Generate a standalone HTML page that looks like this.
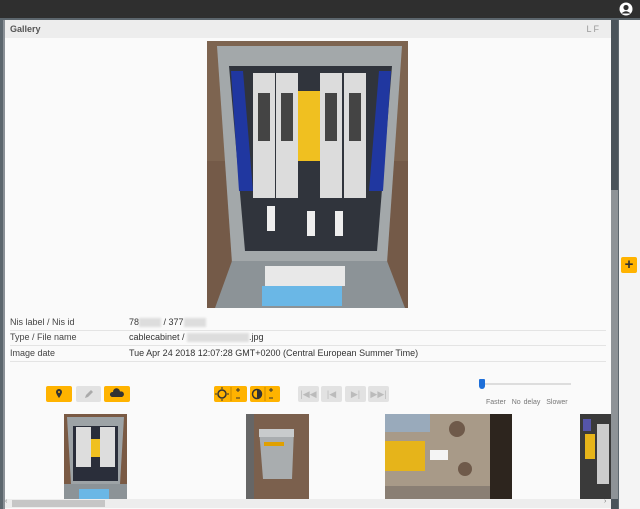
<!DOCTYPE html>
<html><head><style>
*{margin:0;padding:0;box-sizing:border-box}
body{width:640px;height:509px;overflow:hidden;background:#5c666d;font-family:"Liberation Sans",sans-serif;position:relative}
.a{position:absolute}
.top{left:0;top:0;width:640px;height:18px;background:#2f2f2f}
.win{left:3px;top:20px;width:608px;height:489px;background:#fafafa;border-left:2px solid #8a9096}
.hdr{left:5px;top:20px;width:606px;height:18px;background:#ededed;font-size:9px;font-weight:bold;color:#555;padding:4px 5px}
.lbl{font-size:9px;color:#444;left:10px}
.val{font-size:9px;color:#333;left:129px}
.ln{left:10px;width:596px;height:1px;background:#e4e4e4}
.b{height:16px;border-radius:2px;background:#ffb300}
.g{background:#e2e2e2}
.blur{display:inline-block;background:#ddd;height:9px;vertical-align:middle;filter:blur(1px)}
</style></head><body>
<div class="a top"></div>
<svg class="a" style="left:619px;top:2px" width="14" height="14" viewBox="0 0 14 14"><circle cx="7" cy="7" r="6.5" fill="#fff"/><circle cx="7" cy="5.5" r="2.6" fill="#2f2f2f"/><path d="M2.5 11.5Q7 7 11.5 11.5" fill="#2f2f2f"/></svg>
<div class="a win"></div>
<div class="a hdr">Gallery<span style="position:absolute;right:10px;top:4px;font-weight:normal;color:#999;letter-spacing:2px">LF</span></div>
<div class="a" style="left:611px;top:20px;width:7px;height:489px;background:#8e9397"></div>
<div class="a" style="left:611px;top:20px;width:7px;height:170px;background:#4a535a"></div>
<div class="a" style="left:619px;top:20px;width:21px;height:489px;background:#f4f4f4"></div>
<div class="a" style="left:621px;top:257px;width:16px;height:16px;background:#ffb300;border-radius:2px;color:#333;font-weight:bold;font-size:15px;line-height:16px;text-align:center">+</div>

<svg class="a" style="left:207px;top:41px" width="201" height="267" viewBox="0 0 201 267">
<rect width="201" height="267" fill="#7d6450"/>
<rect x="0" y="120" width="201" height="147" fill="#6e5442" opacity=".6"/>
<path d="M10 5H195L180 222H25Z" fill="#a3a8aa"/>
<path d="M22 25H185L170 210H38Z" fill="#30343c"/>
<path d="M24 30H36L46 150H32Z" fill="#2037a0"/><path d="M172 30H184L176 150H162Z" fill="#2037a0"/>
<rect x="46" y="32" width="22" height="125" fill="#dcdcdc"/><rect x="69" y="32" width="22" height="125" fill="#dcdcdc"/>
<rect x="113" y="32" width="22" height="125" fill="#dcdcdc"/><rect x="137" y="32" width="22" height="125" fill="#dcdcdc"/>
<rect x="91" y="50" width="22" height="70" fill="#f0c020"/>
<rect x="51" y="52" width="12" height="48" fill="#444"/><rect x="74" y="52" width="12" height="48" fill="#444"/><rect x="118" y="52" width="12" height="48" fill="#444"/><rect x="142" y="52" width="12" height="48" fill="#444"/>
<rect x="60" y="165" width="8" height="25" fill="#eee"/><rect x="100" y="170" width="8" height="25" fill="#eee"/><rect x="128" y="170" width="8" height="25" fill="#eee"/>
<path d="M8 267L25 220H180L198 267Z" fill="#8c9397"/>
<rect x="58" y="225" width="80" height="20" fill="#e8e8e8"/>
<rect x="55" y="245" width="80" height="20" fill="#6ab7e6"/>
</svg>

<div class="a lbl" style="top:317px">Nis label / Nis id</div>
<div class="a val" style="top:317px">78<span class="blur" style="width:22px"></span> / 377<span class="blur" style="width:22px"></span></div>
<div class="a ln" style="top:330px"></div>
<div class="a lbl" style="top:332px">Type / File name</div>
<div class="a val" style="top:332px">cablecabinet / <span class="blur" style="width:62px"></span>.jpg</div>
<div class="a ln" style="top:345px"></div>
<div class="a lbl" style="top:348px">Image date</div>
<div class="a val" style="top:348px">Tue Apr 24 2018 12:07:28 GMT+0200 (Central European Summer Time)</div>
<div class="a ln" style="top:361px"></div>

<div class="a b" style="left:46px;top:386px;width:26px"><svg width="26" height="16"><path d="M13 3a3 3 0 0 1 3 3c0 2-3 6-3 6s-3-4-3-6a3 3 0 0 1 3-3z" fill="#333"/><circle cx="13" cy="6" r="1" fill="#ffb300"/></svg></div>
<div class="a b g" style="left:76px;top:386px;width:25px"><svg width="25" height="16"><path d="M9 12l1-3 5-5 2 2-5 5z" fill="#aaa"/></svg></div>
<div class="a b" style="left:104px;top:386px;width:26px"><svg width="26" height="16"><path d="M8 11a2.5 2.5 0 0 1 1-5 3.5 3.5 0 0 1 7-.5 2.8 2.8 0 0 1 2 5.5z" fill="#333"/></svg></div>

<div class="a b" style="left:214px;top:386px;width:33px"><svg width="33" height="16"><circle cx="8" cy="8" r="4" fill="none" stroke="#333" stroke-width="1.5"/><path d="M8 1v2M8 13v2M1 8h2M13 8h2" stroke="#333"/><path d="M17 1v14" stroke="#c88a00"/><path d="M22 4h4M24 2v4M22 12h4" stroke="#333"/></svg></div>
<div class="a b" style="left:250px;top:386px;width:30px"><svg width="30" height="16"><circle cx="7" cy="8" r="4.5" fill="none" stroke="#333" stroke-width="1.5"/><path d="M7 3.5a4.5 4.5 0 0 1 0 9z" fill="#333"/><path d="M15 1v14" stroke="#c88a00"/><path d="M19 4h4M21 2v4M19 12h4" stroke="#333"/></svg></div>

<div class="a b g" style="left:298px;top:386px;width:21px;color:#bbb;font-size:9px;text-align:center;line-height:16px">|◀◀</div>
<div class="a b g" style="left:321px;top:386px;width:21px;color:#bbb;font-size:9px;text-align:center;line-height:16px">|◀</div>
<div class="a b g" style="left:345px;top:386px;width:21px;color:#bbb;font-size:9px;text-align:center;line-height:16px">▶|</div>
<div class="a b g" style="left:368px;top:386px;width:21px;color:#bbb;font-size:9px;text-align:center;line-height:16px">▶▶|</div>
<div class="a" style="left:480px;top:383px;width:91px;height:2px;background:#ddd"></div>
<div class="a" style="left:479px;top:379px;width:6px;height:10px;background:#1e6fd9;border-radius:1px 1px 3px 3px"></div>
<div class="a" style="left:486px;top:399px;font-size:7px;color:#777;word-spacing:1px">Faster&nbsp; No delay&nbsp; Slower</div>

<svg class="a" style="left:64px;top:414px" width="63" height="85"><rect width="63" height="85" fill="#7a5a44"/><path d="M3 3H60L56 70H7Z" fill="#9da3a6"/><rect x="9" y="12" width="45" height="55" fill="#2a2e3a"/><rect x="12" y="13" width="15" height="40" fill="#ddd"/><rect x="36" y="13" width="15" height="40" fill="#ddd"/><rect x="27" y="25" width="9" height="18" fill="#f0c020"/><rect x="0" y="70" width="63" height="15" fill="#8c9397"/><rect x="15" y="75" width="30" height="10" fill="#6ab7e6"/></svg>
<svg class="a" style="left:246px;top:414px" width="63" height="85"><rect width="63" height="85" fill="#7b604d"/><rect x="0" y="0" width="8" height="85" fill="#666"/><path d="M13 15H48L46 65H17Z" fill="#a9adaf"/><rect x="13" y="15" width="35" height="8" fill="#c8cbcc"/><rect x="18" y="28" width="20" height="4" fill="#e0a000"/></svg>
<svg class="a" style="left:385px;top:414px" width="127" height="85"><rect width="127" height="85" fill="#a89a88"/><rect x="0" y="0" width="45" height="18" fill="#9ab"/><rect x="0" y="27" width="40" height="30" fill="#e6b41a"/><rect x="45" y="36" width="18" height="10" fill="#f4f4f4"/><rect x="105" y="0" width="22" height="85" fill="#2d251e"/><rect x="0" y="72" width="105" height="13" fill="#8a7f74"/><circle cx="72" cy="15" r="8" fill="#6f5a4a"/><circle cx="80" cy="55" r="7" fill="#6f5a4a"/></svg>
<svg class="a" style="left:580px;top:414px" width="31" height="85"><rect width="31" height="85" fill="#3a3a3a"/><rect x="5" y="20" width="10" height="25" fill="#e6b41a"/><rect x="17" y="10" width="12" height="60" fill="#ccc"/><rect x="3" y="5" width="8" height="12" fill="#55a"/></svg>

<div class="a" style="left:5px;top:499px;width:606px;height:9px;background:#ededed"></div>
<div class="a" style="left:12px;top:500px;width:93px;height:7px;background:#c6c6c6"></div>
<div class="a" style="left:5px;top:498px;font-size:7px;color:#777">‹</div>
<div class="a" style="left:604px;top:498px;font-size:7px;color:#777">›</div>
<div class="a" style="left:611px;top:499px;width:7px;height:10px;background:#4a535a"></div>
</body></html>
